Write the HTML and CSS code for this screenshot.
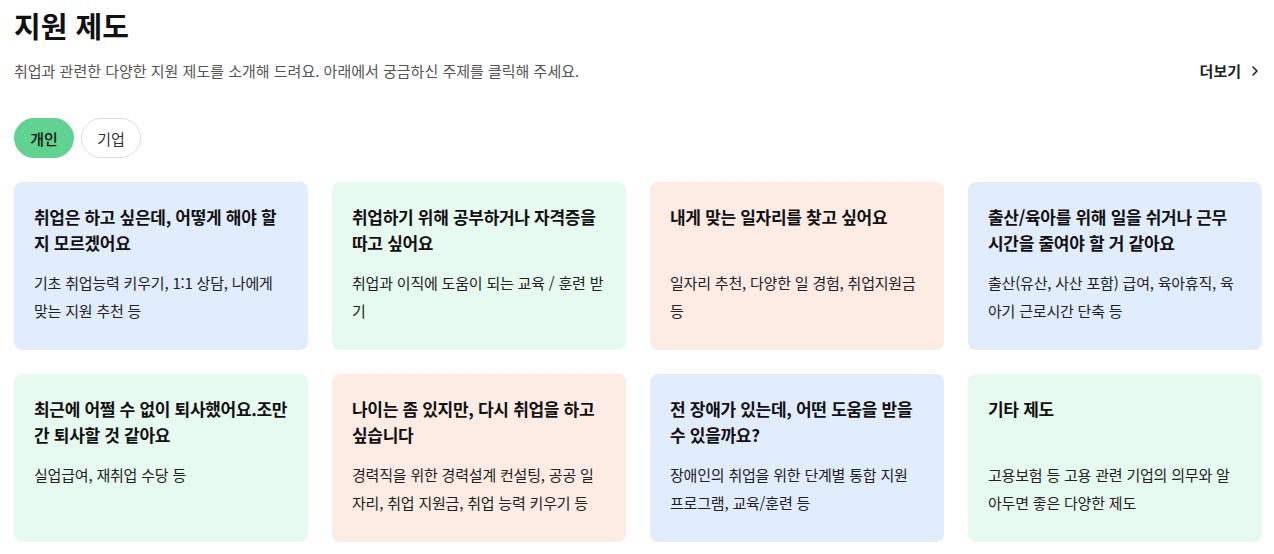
FILE: index.html
```html
<!DOCTYPE html>
<html lang="ko">
<head>
<meta charset="utf-8">
<link rel="stylesheet" href="styles.css">
</head>
<body>
<main class="page">
  <h1 class="title">지원 제도</h1>
  <div class="sub-row">
    <p class="subtitle">취업과 관련한 다양한 지원 제도를 소개해 드려요. 아래에서 궁금하신 주제를 클릭해 주세요.</p>
    <a class="more" href="#">더보기
      <svg class="chev" width="12" height="12" viewBox="0 0 12 12"><path d="M4 2 L8 6 L4 10" fill="none" stroke="#222" stroke-width="1.6" stroke-linecap="round" stroke-linejoin="round"/></svg>
    </a>
  </div>
  <div class="tabs">
    <button class="tab active">개인</button>
    <button class="tab">기업</button>
  </div>
  <div class="grid">
    <div class="card blue">
      <h2 class="card-title">취업은 하고 싶은데, 어떻게 해야 할지 모르겠어요</h2>
      <p class="card-desc">기초 취업능력 키우기, 1:1 상담, 나에게 맞는 지원 추천 등</p>
    </div>
    <div class="card green">
      <h2 class="card-title">취업하기 위해 공부하거나 자격증을 따고 싶어요</h2>
      <p class="card-desc">취업과 이직에 도움이 되는 교육 / 훈련 받기</p>
    </div>
    <div class="card peach">
      <h2 class="card-title">내게 맞는 일자리를 찾고 싶어요</h2>
      <p class="card-desc">일자리 추천, 다양한 일 경험, 취업지원금 등</p>
    </div>
    <div class="card blue">
      <h2 class="card-title">출산/육아를 위해 일을 쉬거나 근무 시간을 줄여야 할 거 같아요</h2>
      <p class="card-desc">출산(유산, 사산 포함) 급여, 육아휴직, 육아기 근로시간 단축 등</p>
    </div>
    <div class="card green">
      <h2 class="card-title">최근에 어쩔 수 없이 퇴사했어요.조만간 퇴사할 것 같아요</h2>
      <p class="card-desc">실업급여, 재취업 수당 등</p>
    </div>
    <div class="card peach">
      <h2 class="card-title">나이는 좀 있지만, 다시 취업을 하고 싶습니다</h2>
      <p class="card-desc">경력직을 위한 경력설계 컨설팅, 공공 일자리, 취업 지원금, 취업 능력 키우기 등</p>
    </div>
    <div class="card blue">
      <h2 class="card-title">전 장애가 있는데, 어떤 도움을 받을 수 있을까요?</h2>
      <p class="card-desc">장애인의 취업을 위한 단계별 통합 지원 프로그램, 교육/훈련 등</p>
    </div>
    <div class="card green">
      <h2 class="card-title">기타 제도</h2>
      <p class="card-desc">고용보험 등 고용 관련 기업의 의무와 알아두면 좋은 다양한 제도</p>
    </div>
  </div>
</main>
</body>
</html>
```
FILE: styles.css
```css
* { box-sizing: border-box; }
html, body { margin: 0; padding: 0; background: #fff; }
body {
  font-family: "Noto Sans CJK KR", "Noto Sans", sans-serif;
  color: #111;
}
.page { padding: 6px 12px 0 14px; }
.title {
  margin: 0;
  font-size: 29px;
  line-height: 38px;
  font-weight: 700;
  color: #111;
}
.sub-row {
  display: flex;
  justify-content: space-between;
  align-items: center;
  margin-top: 17px;
}
.subtitle {
  margin: 0;
  font-size: 15px;
  line-height: 20px;
  color: #555;
}
.more {
  display: flex;
  align-items: center;
  gap: 8px;
  font-size: 15px;
  line-height: 20px;
  font-weight: 700;
  color: #222;
  text-decoration: none;
  margin-right: 1px;
}
.tabs {
  display: flex;
  gap: 7px;
  margin-top: 37px;
}
.tab {
  height: 40px;
  width: 60px;
  border-radius: 20px;
  border: 1px solid #ddd;
  background: #fff;
  font-family: inherit;
  font-size: 15px;
  color: #333;
  padding: 0;
}
.tab.active {
  background: #5fd38f;
  border-color: #5fd38f;
  color: #111;
  font-weight: 500;
}
.grid {
  display: grid;
  grid-template-columns: repeat(4, 1fr);
  gap: 24px;
  margin-top: 24px;
}
.card {
  height: 168px;
  border-radius: 8px;
  padding: 22px 20px 20px;
}
.card.blue { background: #e1edfd; }
.card.green { background: #e7faef; }
.card.peach { background: #fdece4; }
.card-title {
  margin: 0;
  min-height: 52px;
  font-size: 17px;
  line-height: 26px;
  letter-spacing: -0.3px;
  font-weight: 700;
  color: #111;
}
.card-desc {
  margin: 13px 0 0;
  font-size: 15px;
  line-height: 28px;
  letter-spacing: -0.2px;
  color: #222;
}
```
